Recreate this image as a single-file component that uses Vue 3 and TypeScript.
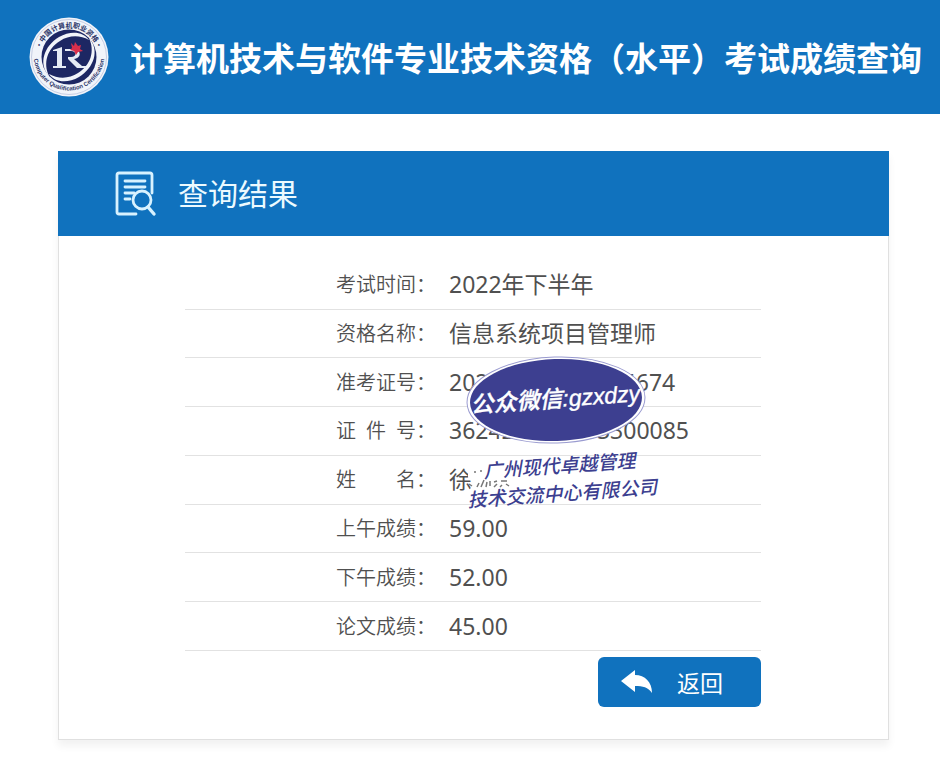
<script setup lang="ts">
interface ResultRow {
  label: string[]
  value: string
  tail?: string
  gap?: 'wide' | 'narrow'
  covered?: boolean
}

const rows: ResultRow[] = [
  { label: ['考试时间'], value: '2022年下半年' },
  { label: ['资格名称'], value: '信息系统项目管理师' },
  { label: ['准考证号'], value: '2022', tail: '4674', gap: 'wide' },
  { label: ['证', '件', '号'], value: '36242', tail: '03300085', gap: 'narrow' },
  { label: ['姓', '名'], value: '徐', covered: true },
  { label: ['上午成绩'], value: '59.00' },
  { label: ['下午成绩'], value: '52.00' },
  { label: ['论文成绩'], value: '45.00' },
]

function goBack(): void {
  window.history.back()
}
</script>

<template>
  <div class="page">
    <header class="banner">
      <svg class="emblem" viewBox="0 0 80 80" aria-hidden="true">
        <defs>
          <path id="arc-top" d="M10.500 40a29.500 29.500 0 0 1 59 0" />
          <path id="arc-bottom" d="M4.500 38a35.500 35.500 0 0 0 71 0" />
        </defs>
        <circle cx="40" cy="40" r="39.500" fill="#f1f4fa" />
        <circle cx="40" cy="40" r="37.500" fill="none" stroke="#a9b4d4" stroke-width="0.600" />
        <circle cx="40" cy="40" r="27.500" fill="#1d2763" />
        <path d="M20 59C9 47 15 29 30 20 42 13 55 15 60 23 51 18 40 18 31 24 18 32 14 46 20 59Z" fill="#f1f4fa" />
        <path d="M60 21C71 33 65 51 50 60 38 67 25 65 20 57 29 62 40 62 49 56 62 48 66 34 60 21Z" fill="#f1f4fa" />
        <path d="M24 33l9-3v19h4v2H24v-2h4V34h-4Z" fill="#e5ebf6" />
        <path d="M36 32h7c10 0 10 9 2 10l8 7h4v2h-9l-9-9v-2h3c6 0 6-6 0-6h-6Z" fill="#e5ebf6" />
        <path d="M42 26l3 3 1-4 3 4 3-1-1 4 3 2-5 1-2 3-2-4-4-1 2-2Z" fill="#d92f4b" />
        <text class="emblem-cn"><textPath href="#arc-top" startOffset="50%" text-anchor="middle">·中国计算机职业资格·</textPath></text>
        <text class="emblem-en"><textPath href="#arc-bottom" startOffset="50%" text-anchor="middle">Computer Qualification Certification</textPath></text>
      </svg>
      <h1>计算机技术与软件专业技术资格（水平）考试成绩查询</h1>
    </header>

    <main class="card">
      <div class="card-head">
        <svg class="search-icon" viewBox="0 0 42 46" fill="none" stroke="#d8f2ff" stroke-width="2.800" stroke-linecap="round" stroke-linejoin="round" aria-hidden="true">
          <path d="M37 22V4q0-2-2-2H4Q2 2 2 4v37q0 2 2 2h17" />
          <path d="M10 10h20M10 16h20M10 22h9M10 28h5" />
          <circle cx="27" cy="29" r="9" />
          <path d="M33 36l6 7" stroke-width="3.400" />
        </svg>
        <h2>查询结果</h2>
      </div>

      <div class="card-body">
        <div class="result">
          <table>
            <tbody>
              <tr v-for="row in rows" :key="row.value">
                <th scope="row">
                  <span class="label">
                    <span class="words"><span v-for="part in row.label" :key="part">{{ part }}</span></span>
                    <span>：</span>
                  </span>
                </th>
                <td>
                  <span class="value">
                    <span>{{ row.value }}</span>
                    <span v-if="row.tail" :class="row.gap">{{ row.tail }}</span>
                    <svg v-if="row.covered" class="traces" viewBox="0 0 40 24" aria-hidden="true">
                      <path class="cover" d="M-4 0H40V24H-2L0 15-4 10Z" />
                      <path d="M-3 17l3 2M5 20l2-4M9 20l3-7M14 20l1-5M18 14v5M22 15l3-1M25 17l-3 3M29 14h6M30 18l-2 2M34 17l3 2M2 5h2M8 4h2" />
                    </svg>
                  </span>
                </td>
              </tr>
            </tbody>
          </table>

          <svg class="stamp" viewBox="0 0 200 164">
            <g transform="rotate(-2 95 49)">
              <ellipse cx="95" cy="49" rx="89" ry="43" fill="#fff" stroke="#9a9bd0" stroke-width="1" />
              <ellipse cx="95" cy="49" rx="86" ry="41" fill="#3d3f90" />
            </g>
            <text class="stamp-id" transform="translate(10 62) rotate(-4)">公众微信:gzxdzy</text>
            <text class="stamp-org" transform="translate(23 127) rotate(-4)">广州现代卓越管理</text>
            <text class="stamp-org" transform="translate(7 156) rotate(-4)">技术交流中心有限公司</text>
          </svg>
        </div>

        <div class="actions">
          <button type="button" @click="goBack">
            <svg viewBox="0 0 32 24" aria-hidden="true">
              <path d="M0 11L14 0v5c10 0 17 7 17 18-4-6-9-7-17-7v6Z" fill="#fff" />
            </svg>
            <span>返回</span>
          </button>
        </div>
      </div>
    </main>
  </div>
</template>

<style>
body {
  margin: 0;
  background: #fff;
}
</style>

<style scoped>
.page {
  font-family: "Noto Sans", "Noto Sans CJK SC", sans-serif;
  color: #505050;
}

.banner {
  display: flex;
  align-items: center;
  gap: 21px;
  box-sizing: border-box;
  min-height: 114px;
  padding: 0 16px 0 29px;
  background: #1072be;
  color: #fff;
}

.emblem {
  flex: none;
  width: 80px;
  height: 80px;
}

.emblem-cn {
  font: 700 7px "Noto Sans CJK SC", sans-serif;
  fill: #2b3568;
}

.emblem-en {
  font: 700 6px "Liberation Sans", sans-serif;
  fill: #2b3568;
}

h1 {
  margin: 0;
  font-family: "Noto Sans CJK SC", sans-serif;
  font-size: 33px;
  line-height: 48px;
  font-weight: 700;
  white-space: nowrap;
}

.card {
  margin: 37px 51px 28px 58px;
  border: 1px solid #e0e0e0;
  border-top: 0;
  box-shadow: 0 6px 8px #f2f2f2;
}

.card-head {
  display: flex;
  align-items: center;
  gap: 21px;
  height: 85px;
  margin: 0 -1px;
  padding-left: 57px;
  background: #1072be;
  color: #ecfaff;
}

.search-icon {
  width: 42px;
  height: 46px;
}

h2 {
  margin: 0;
  font-size: 30px;
  line-height: 44px;
  font-weight: 400;
}

.card-body {
  padding: 25px 127px 32px 126px;
}

.result {
  position: relative;
}

table {
  width: 100%;
  height: 390px;
  border-collapse: collapse;
  table-layout: fixed;
}

tr {
  border-bottom: 1px solid #e2e2e2;
}

th,
td {
  padding: 0 0 1px;
  font-weight: 400;
  text-align: left;
  vertical-align: middle;
}

th {
  width: 264px;
  font-size: 20px;
  line-height: 28px;
}

td {
  font-size: 23px;
  line-height: 32px;
}

.label {
  display: flex;
  justify-content: flex-end;
  padding-right: 13px;
  font-family: "Noto Sans CJK SC", sans-serif;
  font-weight: 350;
  color: #505050;
}

.words {
  display: flex;
  justify-content: space-between;
  width: 80px;
}

.value {
  display: flex;
  align-items: center;
}

.wide {
  margin-left: 121px;
}

.narrow {
  margin-left: 69px;
}

.traces {
  width: 40px;
  height: 24px;
  overflow: visible;
  fill: none;
  stroke: #777;
  stroke-width: 1.500;
}

.traces .cover {
  fill: #fff;
  stroke: none;
}

.stamp {
  position: absolute;
  top: 90px;
  left: 276px;
  width: 200px;
  height: 164px;
}

.stamp text {
  font-style: italic;
}

.stamp .stamp-id {
  font-family: "Liberation Sans", "Noto Sans CJK SC", sans-serif;
  font-size: 23px;
  font-weight: 500;
  fill: #fff;
  stroke: #fff;
  stroke-width: 0.400;
}

.stamp .stamp-org {
  font-family: "Noto Sans CJK SC", sans-serif;
  font-size: 19px;
  font-weight: 500;
  fill: #3d3f90;
}

.actions {
  display: flex;
  justify-content: flex-end;
  padding-top: 6px;
}

button {
  display: flex;
  align-items: center;
  gap: 24px;
  width: 163px;
  height: 50px;
  padding: 0 0 0 23px;
  border: 0;
  border-radius: 6px;
  background: #1072be;
  color: #fff;
  font: 400 23px/32px "Noto Sans CJK SC", sans-serif;
  cursor: pointer;
}

button svg {
  width: 32px;
  height: 24px;
}
</style>
